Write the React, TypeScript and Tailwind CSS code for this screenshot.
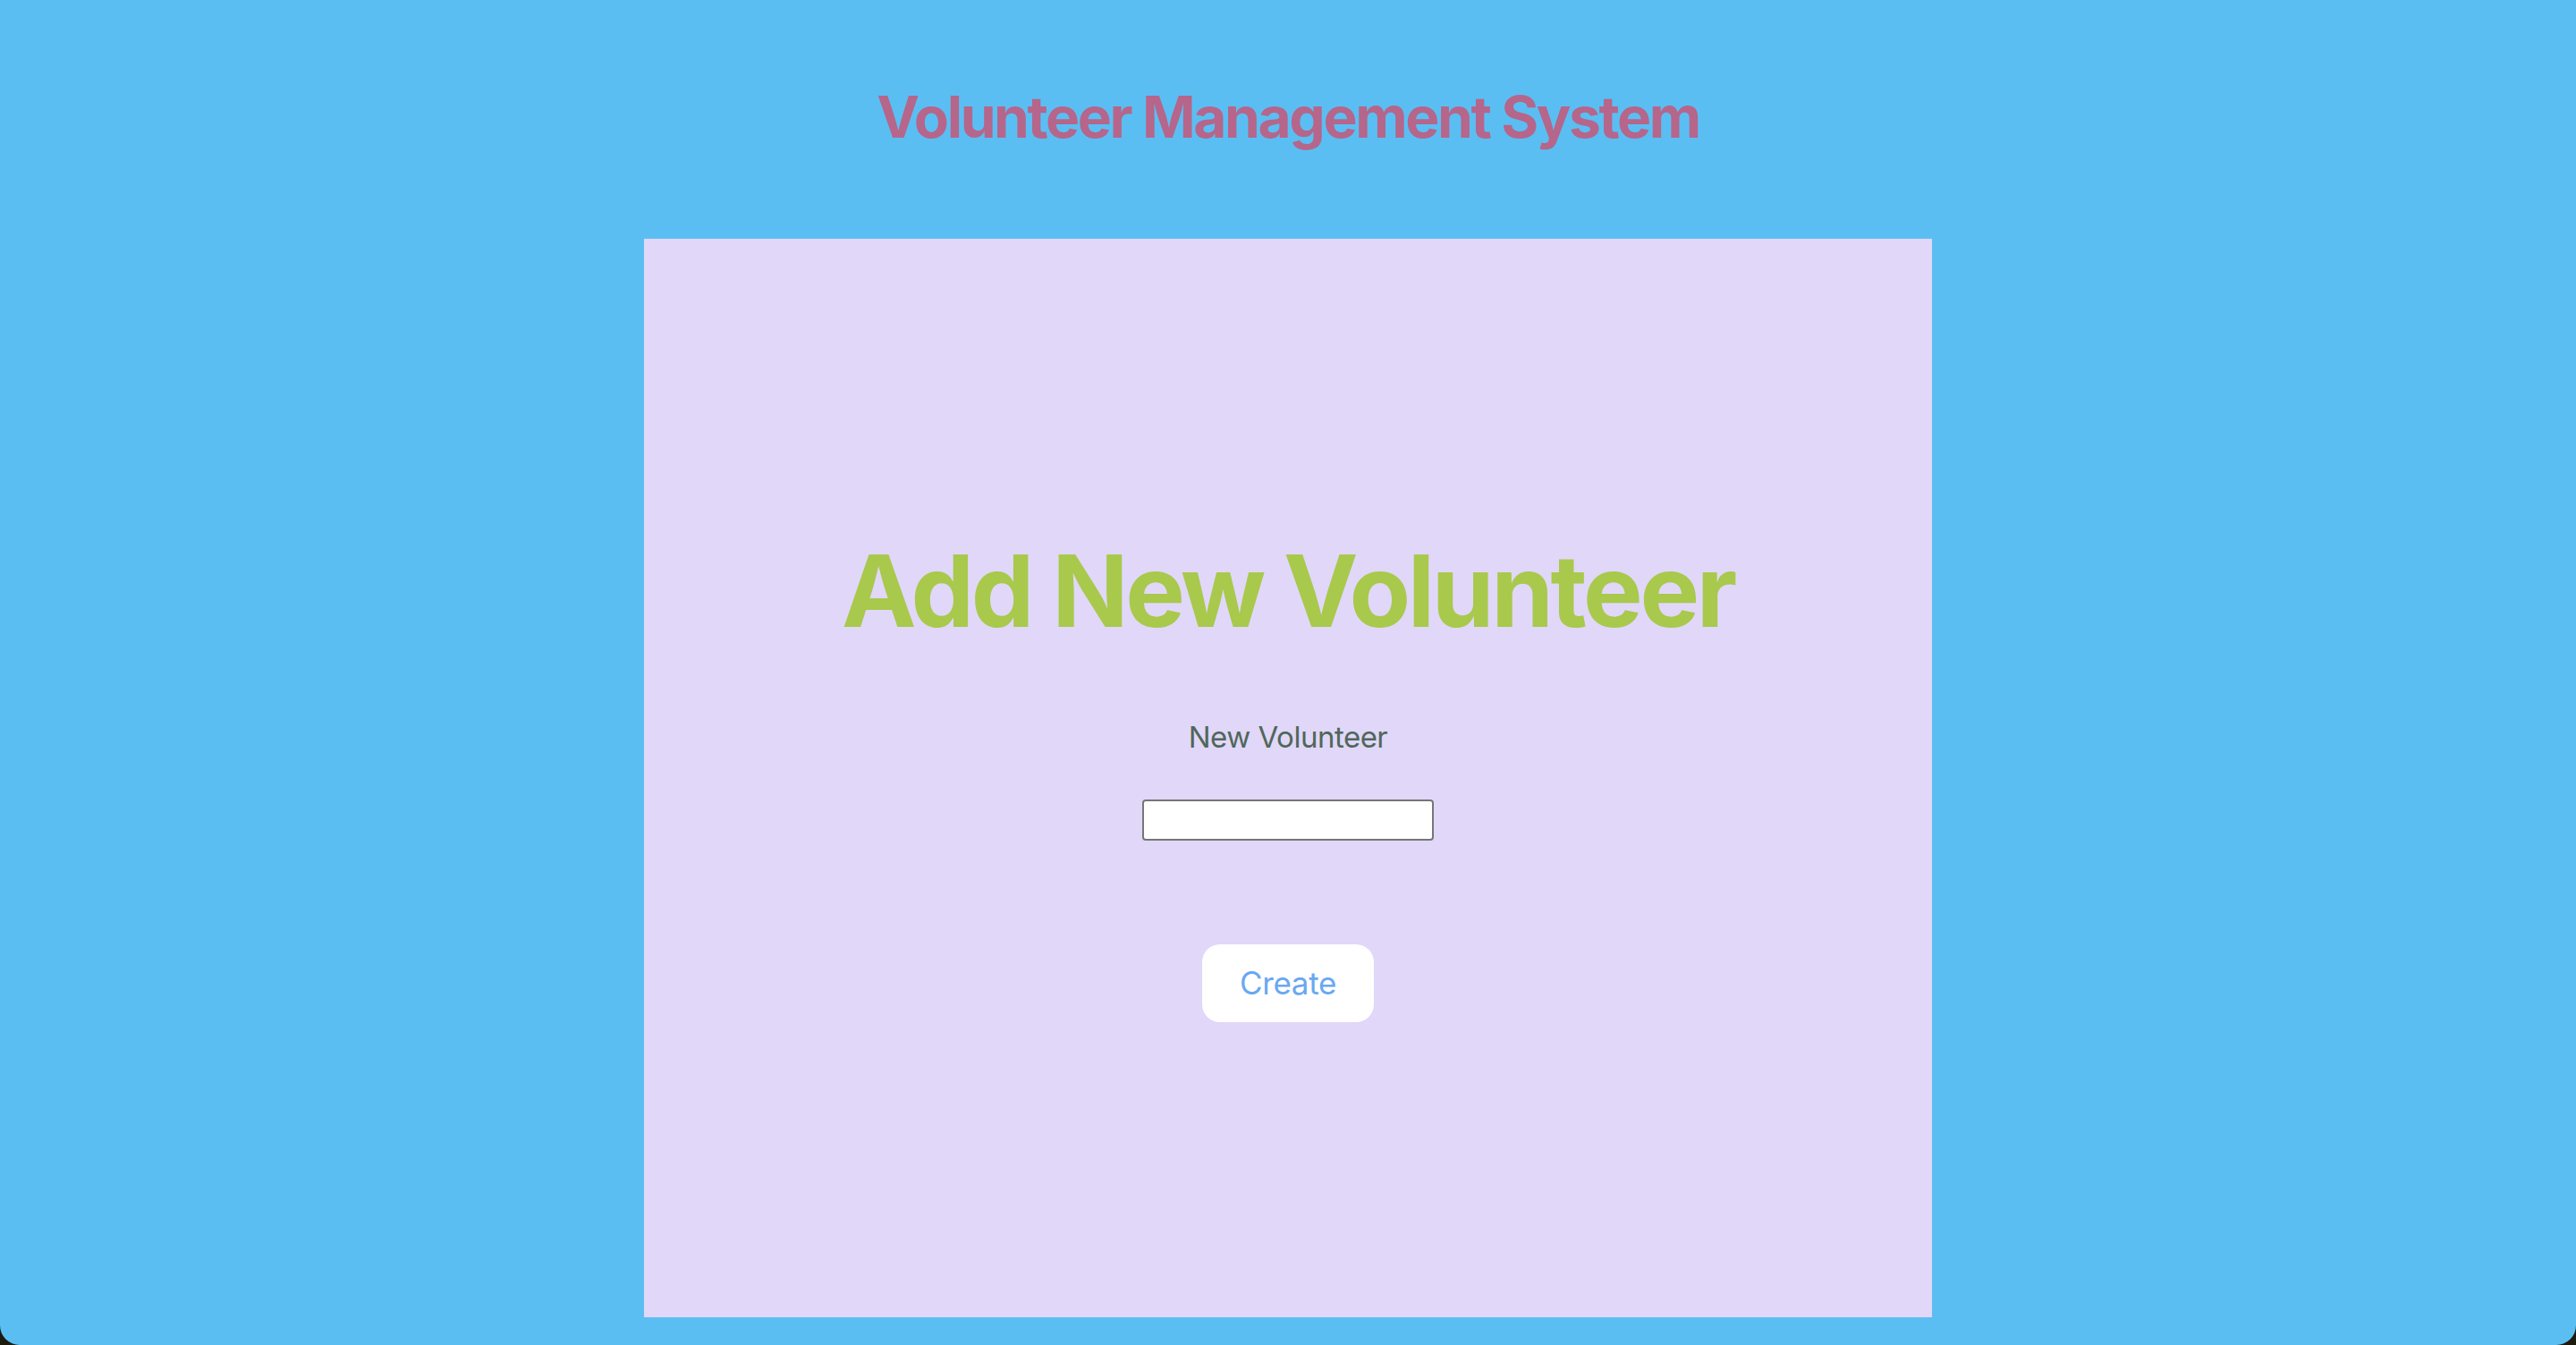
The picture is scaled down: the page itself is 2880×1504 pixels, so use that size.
import React from "react";

export default function App() {
  return (
    <div className="w-[2880px] h-[1504px] bg-[#1d1b0e]" style={{ fontFamily: "Inter, 'Noto Sans', sans-serif" }}>
      <div className="w-full h-full bg-[#5bbef3] rounded-b-[22px] flex flex-col items-center">
        <h1 className="mt-[99px] text-[64px] leading-none font-bold tracking-[-0.037em] text-[#b5668a]">
          Volunteer Management System
        </h1>
        <div className="mt-[104px] w-[1440px] h-[1206px] bg-[#e1d7f9] flex flex-col items-center pt-[337px]">
          <h2 className="text-[112px] leading-none font-bold tracking-[-0.03em] text-[#a8c94c]">
            Add New Volunteer
          </h2>
          <label className="mt-[92px] text-[33px] leading-none tracking-[-0.015em] text-[#50675a]">New Volunteer</label>
          <input
            type="text"
            className="mt-[53px] w-[326px] h-[46px] bg-white border-2 border-[#767676] rounded-[4px] outline-none px-2 text-[28px]"
          />
          <button className="mt-[116px] w-[192px] h-[87px] bg-white rounded-[20px] text-[35px] tracking-[-0.01em] text-[#6aa8f0]">
            Create
          </button>
        </div>
      </div>
    </div>
  );
}
